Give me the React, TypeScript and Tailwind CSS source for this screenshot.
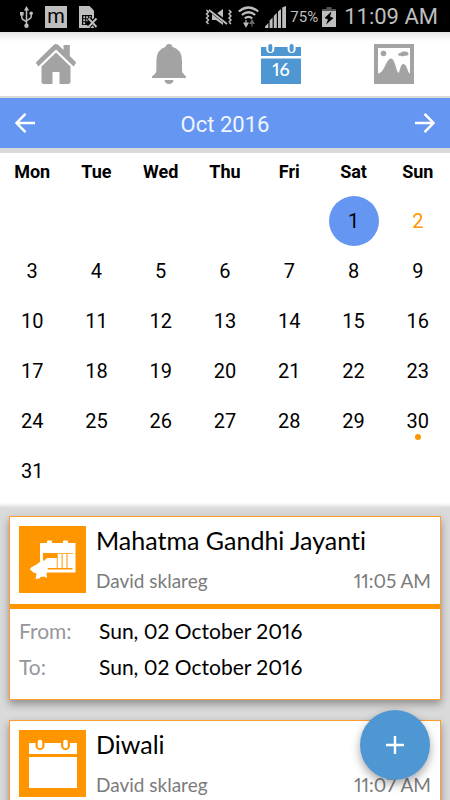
import { useState } from "react";

type CalendarEvent = {
  id: string;
  title: string;
  author: string;
  time: string;
  from: string;
  to: string;
  icon: "holiday" | "calendar";
};

const weekDays = ["Mon", "Tue", "Wed", "Thu", "Fri", "Sat", "Sun"];

// October 2016 starts on a Saturday
const leadingBlanks = 5;
const daysInMonth = 31;
const holiday = 2;
const markedDay = 30;

const events: CalendarEvent[] = [
  {
    id: "gandhi",
    title: "Mahatma Gandhi Jayanti",
    author: "David sklareg",
    time: "11:05 AM",
    from: "Sun, 02 October 2016",
    to: "Sun, 02 October 2016",
    icon: "holiday",
  },
  {
    id: "diwali",
    title: "Diwali",
    author: "David sklareg",
    time: "11:07 AM",
    from: "Sun, 30 October 2016",
    to: "Sun, 30 October 2016",
    icon: "calendar",
  },
];

const StatusBar = () => (
  <div className="flex h-8 shrink-0 items-center justify-between bg-black pl-5 pr-3 pt-0.5 text-[#bebebe]">
    <div className="flex items-center gap-3">
      <svg width="13" height="22" viewBox="0 0 13 22" fill="none" stroke="currentColor" strokeWidth="1.5">
        <path d="M6.5 3v16M1.8 8v3.5q0 1.5 1.5 2.2l3.2 2.3M11.2 7v3.5q0 1.5-1.5 2.2L6.5 15" />
        <path d="M6.5 0l2.6 4.5H3.9zM0 6h3.6v3.4H0z" fill="currentColor" stroke="none" />
        <circle cx="11.2" cy="7.3" r="1.8" fill="currentColor" stroke="none" />
        <circle cx="6.5" cy="19.7" r="2.2" fill="currentColor" stroke="none" />
      </svg>
      <span className="flex h-[22px] w-[22px] justify-center bg-[#bebebe] text-xl leading-5 text-black">
        m
      </span>
      <svg width="19" height="22" viewBox="0 0 19 22">
        <path d="M0 0h10.5L15 4.5V22H0z" fill="currentColor" />
        <path d="M3 9h10v10H3z" fill="#000" />
        <path d="M4.2 10.2h2v2h-2zM7.2 10.2h2v2h-2zM10.2 10.2h2v2h-2zM4.2 13.2h2v2h-2zM7.2 13.2h2v2h-2zM4.2 16.2h2v2h-2z" fill="currentColor" />
        <path d="M9.5 12.5l8 8m0-8l-8 8" stroke="#000" strokeWidth="4.5" />
        <path d="M9.5 12.5l8 8.5m0-8.5l-8 8.5" stroke="currentColor" strokeWidth="2" />
      </svg>
    </div>
    <div className="flex items-center gap-1">
      <svg width="27" height="18" viewBox="0 0 27 18" fill="none" stroke="currentColor">
        <path d="M1.5 2l2 2-2 2 2 2-2 2 2 2-2 2 2 2M24 2l2 2-2 2 2 2-2 2 2 2-2 2 2 2" strokeWidth="1.5" />
        <path d="M7 6h4l7-5v16l-7-5H7z" fill="currentColor" stroke="none" />
        <path d="M5 2l18 14" stroke="#000" strokeWidth="4" />
        <path d="M4 2l18 14" strokeWidth="1.8" />
      </svg>
      <svg className="mx-0.5" width="21" height="22" viewBox="0 0 21 22" fill="none" stroke="currentColor" strokeWidth="2.2">
        <path d="M.8 5.5q9.7-8 19.4 0M3.8 9q6.7-5.5 13.4 0M6.8 12.3q3.7-3 7.4 0" />
        <path d="M8 14v3M6 17h4l-2 3.5z" strokeWidth="1.2" fill="currentColor" />
        <path d="M14 20.5v-3M12 17.5l2-3.5 2 3.5z" stroke="#666" fill="#666" strokeWidth="1.2" />
      </svg>
      <svg width="21" height="22" viewBox="0 0 21 22" fill="currentColor">
        <path d="M17.2 1.5L21 0v22h-3.8zM13 5.5L16 3v19h-3zM8.8 10l3-3v15h-3zM4.6 14.5l3-3V22h-3zM0 22v-1.5L3.4 17v5z" />
      </svg>
      <span className="text-[15px] leading-5">75%</span>
      <svg width="14" height="20" viewBox="0 0 14 20">
        <path d="M4.5 0h5v2H14v5H0V2h4.5z" fill="#555" />
        <path d="M0 4h14v16H0z" fill="currentColor" />
        <path d="M9.5 4.5L2.5 11l3.5 1.5-2 5L11.5 11 8 9.5z" fill="#000" />
      </svg>
      <span className="pl-1 text-[22px] leading-7">11:09 AM</span>
    </div>
  </div>
);

const HomeIcon = () => (
  <svg width="40" height="40" viewBox="0 0 40 40" fill="currentColor">
    <path d="M20 0q1.3 0 2.3 1l5.2 5V1h6.3v11l6 6q.6.7 0 1.3L37.6 22.4 20 5.6 2.4 22.4.2 19.3q-.5-.6.1-1.2L17.7 1Q18.7 0 20 0z" />
    <path d="M20 8.500l14.500 14V38q0 2-2 2H23.500V28h-7v12H7.500q-2 0-2-2V22.500z" />
  </svg>
);

const BellIcon = () => (
  <svg width="34" height="40" viewBox="0 0 34 40" fill="currentColor">
    <path d="M17 0q3 0 3.3 2.8Q30 5.5 30 17v9.5q0 2 1.8 3.8L34 32.5V34H0v-1.5l2.6-2.2Q4.4 28.5 4.4 26.5V17Q4.4 5.5 13.7 2.8 14 0 17 0zM12.5 36h9q-.5 4-4.5 4t-4.5-4z" />
  </svg>
);

const CalendarTabIcon = () => (
  <svg width="40" height="40" viewBox="0 0 40 40">
    <path d="M0 3h40v9H0zM0 14.5h40V40H0z" fill="#4f97d2" />
    <path d="M5.3 3v2a4 4 0 0 0 8 0V3zM26.600 3v2a4 4 0 0 0 8 0V3z" fill="#fff" />
    <path d="M9.300 2v4M30.600 2v4" stroke="#4f97d2" strokeWidth="4" strokeLinecap="round" />
    <text x="20" y="32" textAnchor="middle" fill="#fff" fontSize="18" className="font-[Lato,sans-serif] font-medium proportional-nums">
      16
    </text>
  </svg>
);

const GalleryIcon = () => (
  <svg width="40" height="40" viewBox="0 0 40 40">
    <path d="M0 0h40v40H0z" fill="#a3a3a3" />
    <path d="M4 4H36V29.5C33.5 29 33 20 29.5 20C26 20 26 28 24.5 29C22 27 21 14.5 17 14.500C12 14.500 10.500 29.500 4 29.500Z" fill="#fff" />
    <circle cx="9.500" cy="9.500" r="2.800" fill="#a3a3a3" />
    <path d="M24 10.500q0-1.500 2.500-1.500 1-2 3.500-1.500 4-.5 4 1.500 1 .5.500 1.500-1 1.500-4 1.200-2 1-4 0-2.500.300-2.500-1.200z" fill="#a3a3a3" />
  </svg>
);

const HolidayIcon = () => (
  <svg width="67" height="67" viewBox="0 0 67 67" className="shrink-0 bg-[#ff9600]">
    <path d="M21 17h7v-1.5q0-1 1-1h3q1 0 1 1V17h11v-1.5q0-1 1-1h3q1 0 1 1V17h7.5v29.5H21z" fill="#fff" />
    <path d="M25 27h29v.8H25zM37.700 28h1v14h-1zM42.600 28h1v14h-1zM47.500 28h1v14h-1zM24 27h14v5H28l-4 4zM28 42h25.500v1.500H28z" fill="#ff9600" />
    <path d="M28 32.500h9.500V41H28z" fill="#fff" />
    <path d="M24 33.5l2 3.500 3-1-1 4.500 1.500 4.500-2 2 .5 5-3-1.500-3.500.5-1 1.500-4 .5 1-5.500-3-1-3.500-3 1-2 5.500-3z" fill="#fff" />
  </svg>
);

const EventCalendarIcon = () => (
  <svg width="67" height="67" viewBox="0 0 67 67" className="shrink-0 bg-[#ff9600]">
    <path d="M10 13h48v11H10zM10 27h48v31H10z" fill="#fff" />
    <path d="M16.5 12v3.5a4.5 4.5 0 0 0 9 0V12zM42 12v3.5a4.5 4.5 0 0 0 9 0V12z" fill="#ff9600" />
    <path d="M21 12v4M46.5 12v4" stroke="#fff" strokeWidth="4.5" strokeLinecap="round" />
  </svg>
);

const tabs = [
  { label: "Home", Icon: HomeIcon },
  { label: "Notifications", Icon: BellIcon },
  { label: "Calendar", Icon: CalendarTabIcon },
  { label: "Gallery", Icon: GalleryIcon },
];

const TabBar = () => (
  <nav className="grid h-[66px] shrink-0 grid-cols-4 border-b-2 border-[#dadada] bg-linear-to-b from-[#e4e4e4] via-white via-15% to-white text-[#a3a3a3]">
    {tabs.map(({ label, Icon }) => (
      <button key={label} type="button" aria-label={label} className="flex items-center justify-center">
        <Icon />
      </button>
    ))}
  </nav>
);

const ArrowIcon = ({ className }: { className?: string }) => (
  <svg width="20" height="20" viewBox="0 0 20 20" fill="none" stroke="currentColor" strokeWidth="2.4" className={className}>
    <path d="M20 10H2M10.5.8L1.5 10l9 9.2" />
  </svg>
);

const MonthCalendar = () => {
  const [selected, setSelected] = useState(1);
  const days = Array.from({ length: daysInMonth }, (_, i) => i + 1);

  return (
    <section className="shrink-0">
      <div className="flex h-[50px] items-center justify-between bg-[#6597f2] px-[15px] text-white">
        <button type="button" aria-label="Previous month">
          <ArrowIcon />
        </button>
        <h1 className="pt-1 text-[22px] leading-8 text-white/90">Oct 2016</h1>
        <button type="button" aria-label="Next month">
          <ArrowIcon className="rotate-180" />
        </button>
      </div>
      <div className="border-t-[5px] border-[#dadada] bg-white pb-[7px]">
        <div className="grid h-[38px] grid-cols-7 items-center text-center text-lg font-bold">
          {weekDays.map((day) => (
            <span key={day}>{day}</span>
          ))}
        </div>
        <div className="grid grid-cols-7 justify-items-center pt-[5px]">
          {Array.from({ length: leadingBlanks }, (_, i) => (
            <span key={`blank-${i}`} />
          ))}
          {days.map((day) => (
            <button
              key={day}
              type="button"
              onClick={() => setSelected(day)}
              className={`relative size-[50px] rounded-full text-xl ${
                day === selected ? "bg-[#6597f2]" : ""
              } ${day === holiday ? "text-[#ff9600]" : "text-black"}`}
            >
              {day}
              {day === markedDay && (
                <span className="absolute bottom-1.5 left-1/2 size-1.5 -translate-x-1/2 rounded-full bg-[#ff9600]" />
              )}
            </button>
          ))}
        </div>
      </div>
    </section>
  );
};

const EventCard = ({ event }: { event: CalendarEvent }) => (
  <article className="border border-[#ff9d2e] bg-white shadow-[0_4px_8px_rgba(0,0,0,0.35)]">
    <div className="flex gap-2.5 border-b-[5px] border-[#ff9600] px-[9px] pb-[11px] pt-[9px]">
      {event.icon === "holiday" ? <HolidayIcon /> : <EventCalendarIcon />}
      <div className="flex min-w-0 flex-1 flex-col justify-between">
        <h2 className="text-[25px] leading-7 text-black">{event.title}</h2>
        <div className="flex justify-between text-[19px] leading-6 text-[#7b7b7b]">
          <span>{event.author}</span>
          <span>{event.time}</span>
        </div>
      </div>
    </div>
    <dl className="grid grid-cols-[80px_1fr] gap-y-2 px-[9px] pb-[18px] pt-2 text-[21px] leading-7">
      <dt className="text-[#97979b]">From:</dt>
      <dd className="text-black">{event.from}</dd>
      <dt className="text-[#97979b]">To:</dt>
      <dd className="text-black">{event.to}</dd>
    </dl>
  </article>
);

const App = () => {
  return (
    <div className="relative flex h-dvh flex-col overflow-hidden bg-[#dadada] font-[Roboto,sans-serif]">
      <StatusBar />
      <TabBar />
      <MonthCalendar />
      <main className="flex flex-1 flex-col gap-5 overflow-y-auto bg-linear-to-b from-white to-[#dadada] to-[5px] px-[9px] pb-5 pt-[13px] font-[Lato,sans-serif] proportional-nums [font-variant-ligatures:none] [scrollbar-width:none]">
        {events.map((event) => (
          <EventCard key={event.id} event={event} />
        ))}
      </main>
      <button
        type="button"
        aria-label="Add event"
        className="absolute bottom-5 right-5 flex size-[70px] items-center justify-center rounded-full bg-[#4f97d2] text-white shadow-[0_4px_10px_rgba(0,0,0,0.35)]"
      >
        <svg width="18" height="18" viewBox="0 0 18 18" stroke="currentColor" strokeWidth="2.4">
          <path d="M9 0v18M0 9h18" />
        </svg>
      </button>
    </div>
  );
};

export default App;
